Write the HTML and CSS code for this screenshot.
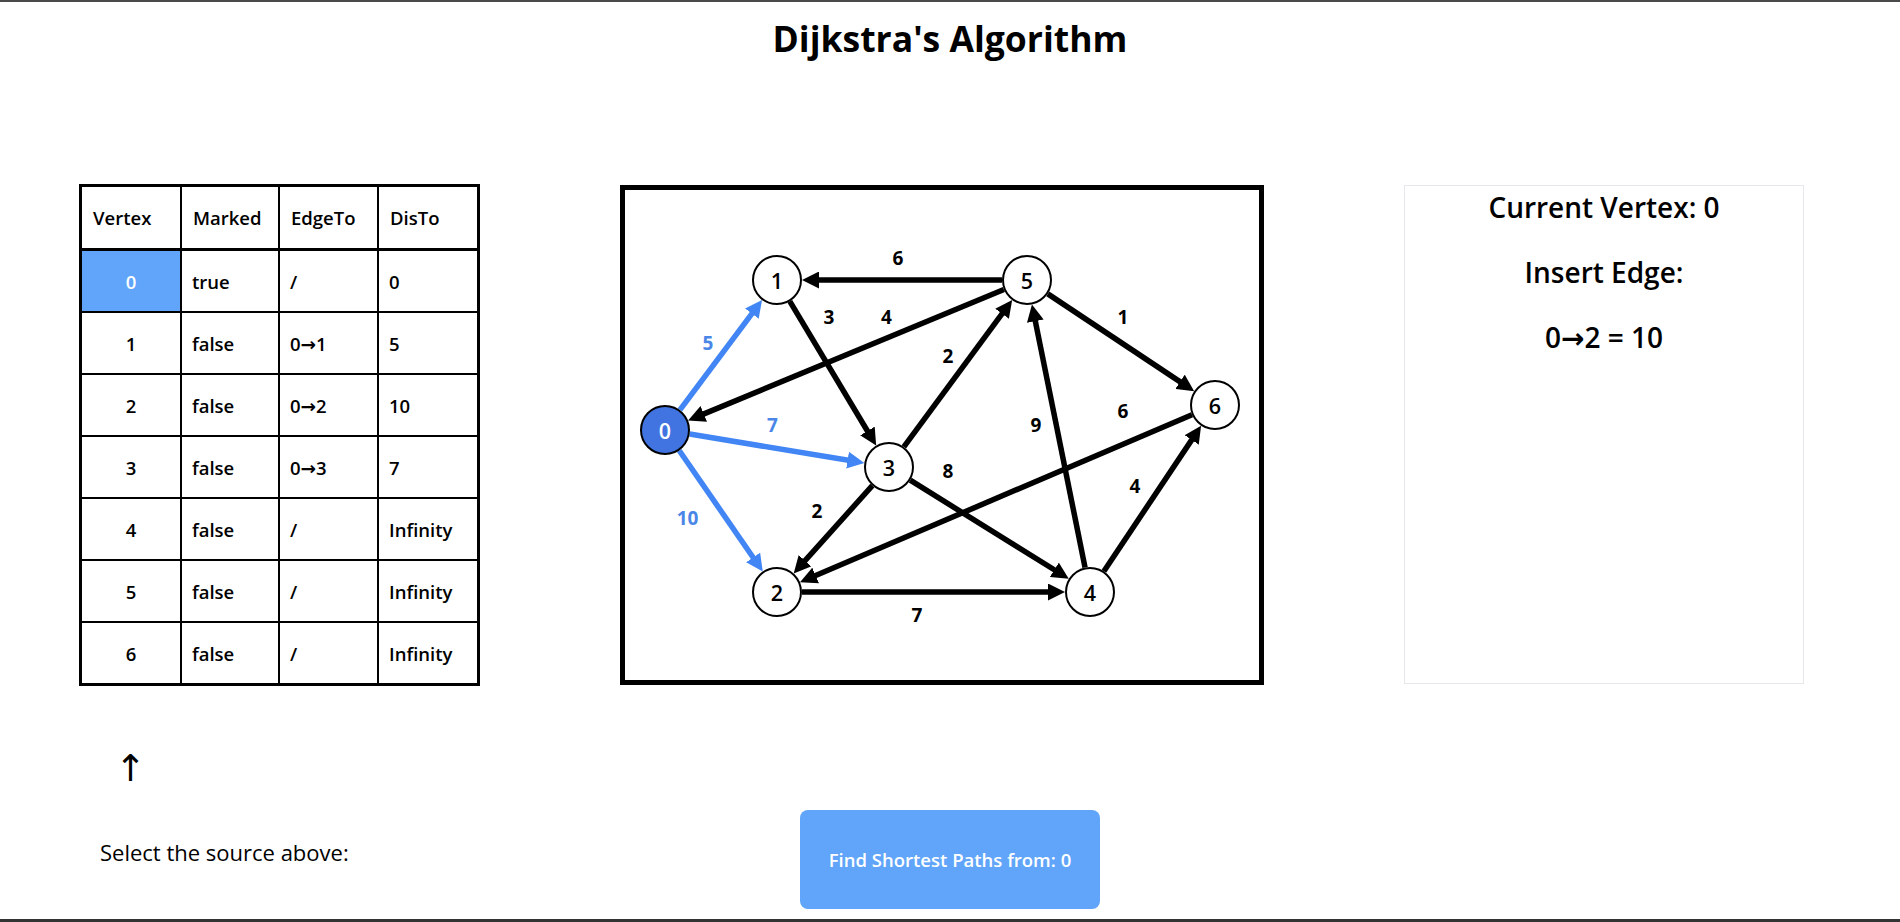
FILE: index.html
```html
<!DOCTYPE html>
<html lang="en">
<head>
<meta charset="utf-8">
<title>Dijkstra's Algorithm</title>
<link rel="stylesheet" href="styles.css">
</head>
<body>
<div class="app">
  <h1 class="title">Dijkstra's Algorithm</h1>
  <main class="stage">
    <table class="dist-table">
      <colgroup><col class="c1"><col class="c2"><col class="c3"><col class="c4"></colgroup>
      <thead>
        <tr><th>Vertex</th><th>Marked</th><th>EdgeTo</th><th>DisTo</th></tr>
      </thead>
      <tbody>
        <tr><td class="vx current">0</td><td>true</td><td>/</td><td>0</td></tr>
        <tr><td class="vx">1</td><td>false</td><td>0→1</td><td>5</td></tr>
        <tr><td class="vx">2</td><td>false</td><td>0→2</td><td>10</td></tr>
        <tr><td class="vx">3</td><td>false</td><td>0→3</td><td>7</td></tr>
        <tr><td class="vx">4</td><td>false</td><td>/</td><td>Infinity</td></tr>
        <tr><td class="vx">5</td><td>false</td><td>/</td><td>Infinity</td></tr>
        <tr><td class="vx">6</td><td>false</td><td>/</td><td>Infinity</td></tr>
      </tbody>
    </table>

    <div class="graph-box">
      <svg class="graph" viewBox="0 0 634 490" width="634" height="490">
        <defs>
          <marker id="ah" viewBox="0 0 17 17" refX="7" refY="8.5" markerWidth="17" markerHeight="17" markerUnits="userSpaceOnUse" orient="auto">
            <path d="M0,0 L17,8.5 L0,17 z" class="head"/>
          </marker>
          <marker id="ahb" viewBox="0 0 17 17" refX="7" refY="8.5" markerWidth="17" markerHeight="17" markerUnits="userSpaceOnUse" orient="auto">
            <path d="M0,0 L17,8.5 L0,17 z" class="head-blue"/>
          </marker>
        </defs>
        <g class="edges">
          <line class="edge blue" x1="54.96" y1="219.97" x2="131.06" y2="118.05" marker-end="url(#ahb)"/>
          <line class="edge blue" x1="64.67" y1="244.07" x2="229.47" y2="271.30" marker-end="url(#ahb)"/>
          <line class="edge blue" x1="54.22" y1="260.56" x2="132.10" y2="373.21" marker-end="url(#ahb)"/>
          <line class="edge" x1="164.85" y1="111.45" x2="246.02" y2="246.97" marker-end="url(#ah)"/>
          <line class="edge" x1="378.90" y1="99.57" x2="72.33" y2="226.60" marker-end="url(#ah)"/>
          <line class="edge" x1="377" y1="90" x2="187" y2="90" marker-end="url(#ah)"/>
          <line class="edge" x1="278.84" y1="256.88" x2="381.22" y2="118.16" marker-end="url(#ah)"/>
          <line class="edge" x1="422.82" y1="103.84" x2="560.85" y2="195.62" marker-end="url(#ah)"/>
          <line class="edge" x1="247.32" y1="295.62" x2="175.36" y2="375.93" marker-end="url(#ah)"/>
          <line class="edge" x1="285.23" y1="290.20" x2="435.28" y2="383.52" marker-end="url(#ah)"/>
          <line class="edge" x1="460.05" y1="377.49" x2="408.93" y2="124.31" marker-end="url(#ah)"/>
          <line class="edge" x1="567.01" y1="224.82" x2="184.19" y2="388.26" marker-end="url(#ah)"/>
          <line class="edge" x1="478.89" y1="381.22" x2="570.55" y2="244.10" marker-end="url(#ah)"/>
          <line class="edge" x1="177" y1="402" x2="430" y2="402" marker-end="url(#ah)"/>
        </g>
        <g class="weights">
          <text x="273" y="68">6</text>
          <text x="204" y="127">3</text>
          <text x="261.5" y="127">4</text>
          <text x="498" y="127">1</text>
          <text class="w-blue" x="83" y="153">5</text>
          <text x="323" y="166">2</text>
          <text class="w-blue" x="147.5" y="235">7</text>
          <text x="411" y="235">9</text>
          <text x="498" y="221">6</text>
          <text x="323" y="281">8</text>
          <text x="192" y="321">2</text>
          <text class="w-blue" x="62.5" y="328">10</text>
          <text x="510" y="296">4</text>
          <text x="292" y="425">7</text>
        </g>
        <g class="nodes">
          <g class="node active"><circle cx="40" cy="240" r="24"/><text x="40" y="240">0</text></g>
          <g class="node"><circle cx="152" cy="90" r="24"/><text x="152" y="90">1</text></g>
          <g class="node"><circle cx="152" cy="402" r="24"/><text x="152" y="402">2</text></g>
          <g class="node"><circle cx="264" cy="277" r="24"/><text x="264" y="277">3</text></g>
          <g class="node"><circle cx="465" cy="402" r="24"/><text x="465" y="402">4</text></g>
          <g class="node"><circle cx="402" cy="90" r="24"/><text x="402" y="90">5</text></g>
          <g class="node"><circle cx="590" cy="215" r="24"/><text x="590" y="215">6</text></g>
        </g>
      </svg>
    </div>

    <section class="info-panel">
      <div class="info-line">Current Vertex: 0</div>
      <div class="info-line">Insert Edge:</div>
      <div class="info-line">0→2 = 10</div>
    </section>
  </main>

  <footer class="controls">
    <div class="source-picker">
      <div class="up-arrow">↑</div>
      <div class="source-label">Select the source above:</div>
    </div>
    <button class="run-btn" type="button">Find Shortest Paths from: 0</button>
    <div class="spacer"></div>
  </footer>
</div>
</body>
</html>
```

FILE: styles.css
```css
html, body {
  margin: 0;
  padding: 0;
  background: #fff;
}

body {
  font-family: "Open Sans", "Noto Sans", "DejaVu Sans", sans-serif;
  color: #000;
}

.app {
  height: 922px;
  box-sizing: border-box;
  border-top: 2px solid #4a4a4a;
  border-bottom: 3px solid #333;
  display: flex;
  flex-direction: column;
  overflow: hidden;
}

.title {
  margin: 12px 0 0;
  font-size: 35.5px;
  line-height: 49px;
  font-weight: 700;
  text-align: center;
}

.stage {
  display: flex;
  align-items: flex-start;
  padding-left: 79px;
  margin-top: 121px;
}

/* ---------- table ---------- */
.dist-table {
  border-collapse: separate;
  border-spacing: 0;
  border: 3px solid #000;
  table-layout: fixed;
  width: 401px;
  font-size: 18.5px;
  font-weight: 600;
}

.dist-table .c1 { width: 100px; }
.dist-table .c2 { width: 98px; }
.dist-table .c3 { width: 99px; }
.dist-table .c4 { width: 98px; }

.dist-table th,
.dist-table td {
  text-align: left;
  padding: 0 0 0 10px;
  border-right: 2px solid #000;
  border-bottom: 2px solid #000;
  white-space: nowrap;
}

.dist-table th:last-child,
.dist-table td:last-child {
  border-right: 0;
}

.dist-table tbody tr:last-child td {
  border-bottom: 0;
}

.dist-table th {
  height: 61px;
  border-bottom-width: 3px;
  font-weight: 600;
  padding-left: 11px;
}

.dist-table td {
  height: 60px;
}

.dist-table td.vx {
  text-align: center;
  padding-left: 0;
}

.dist-table td.current {
  background: #60a5fa;
  color: #fff;
}

/* ---------- graph ---------- */
.graph-box {
  margin-left: 140px;
  margin-top: 1px;
  width: 644px;
  height: 500px;
  box-sizing: border-box;
  border: 5px solid #000;
}

.graph {
  display: block;
}

.edge {
  stroke: #000;
  stroke-width: 5.5;
}

.edge.blue {
  stroke: #4285f4;
}

.head { fill: #000; }
.head-blue { fill: #4285f4; }

.weights text {
  font-family: "Open Sans", "Noto Sans", sans-serif;
  font-size: 19px;
  font-weight: 700;
  text-anchor: middle;
  dominant-baseline: central;
  fill: #000;
}

.weights text.w-blue {
  fill: #4a86e8;
}

.node circle {
  fill: #fff;
  stroke: #000;
  stroke-width: 2;
}

.node text {
  font-family: "Open Sans", "Noto Sans", sans-serif;
  font-size: 21.5px;
  font-weight: 600;
  text-anchor: middle;
  dominant-baseline: central;
  fill: #000;
}

.node.active circle {
  fill: #4174e0;
}

.node.active text {
  fill: #fff;
}

/* ---------- info panel ---------- */
.info-panel {
  margin-left: 140px;
  margin-top: 1px;
  width: 400px;
  height: 499px;
  box-sizing: border-box;
  border: 1px solid #e5e7eb;
  padding-top: 2px;
  display: flex;
  flex-direction: column;
  align-items: center;
  gap: 27px;
  font-size: 28px;
  font-weight: 600;
}

.info-line {
  line-height: 38px;
  white-space: pre;
}

/* ---------- controls ---------- */
.controls {
  display: grid;
  grid-template-columns: 1fr 300px 1fr;
  align-items: start;
  margin-top: 63px;
}

.source-picker {
  padding-left: 100px;
}

.up-arrow {
  margin-left: 15px;
  font-family: "DejaVu Sans", sans-serif;
  font-size: 37px;
  line-height: 40px;
}

.source-label {
  margin-top: 48px;
  font-size: 22px;
  line-height: 30px;
  font-weight: 500;
}

.run-btn {
  margin-top: 61px;
  height: 99px;
  width: 300px;
  border: 0;
  border-radius: 8px;
  background: #60a5fa;
  color: #fff;
  font-family: inherit;
  font-size: 18.5px;
  font-weight: 600;
  cursor: pointer;
}
```
